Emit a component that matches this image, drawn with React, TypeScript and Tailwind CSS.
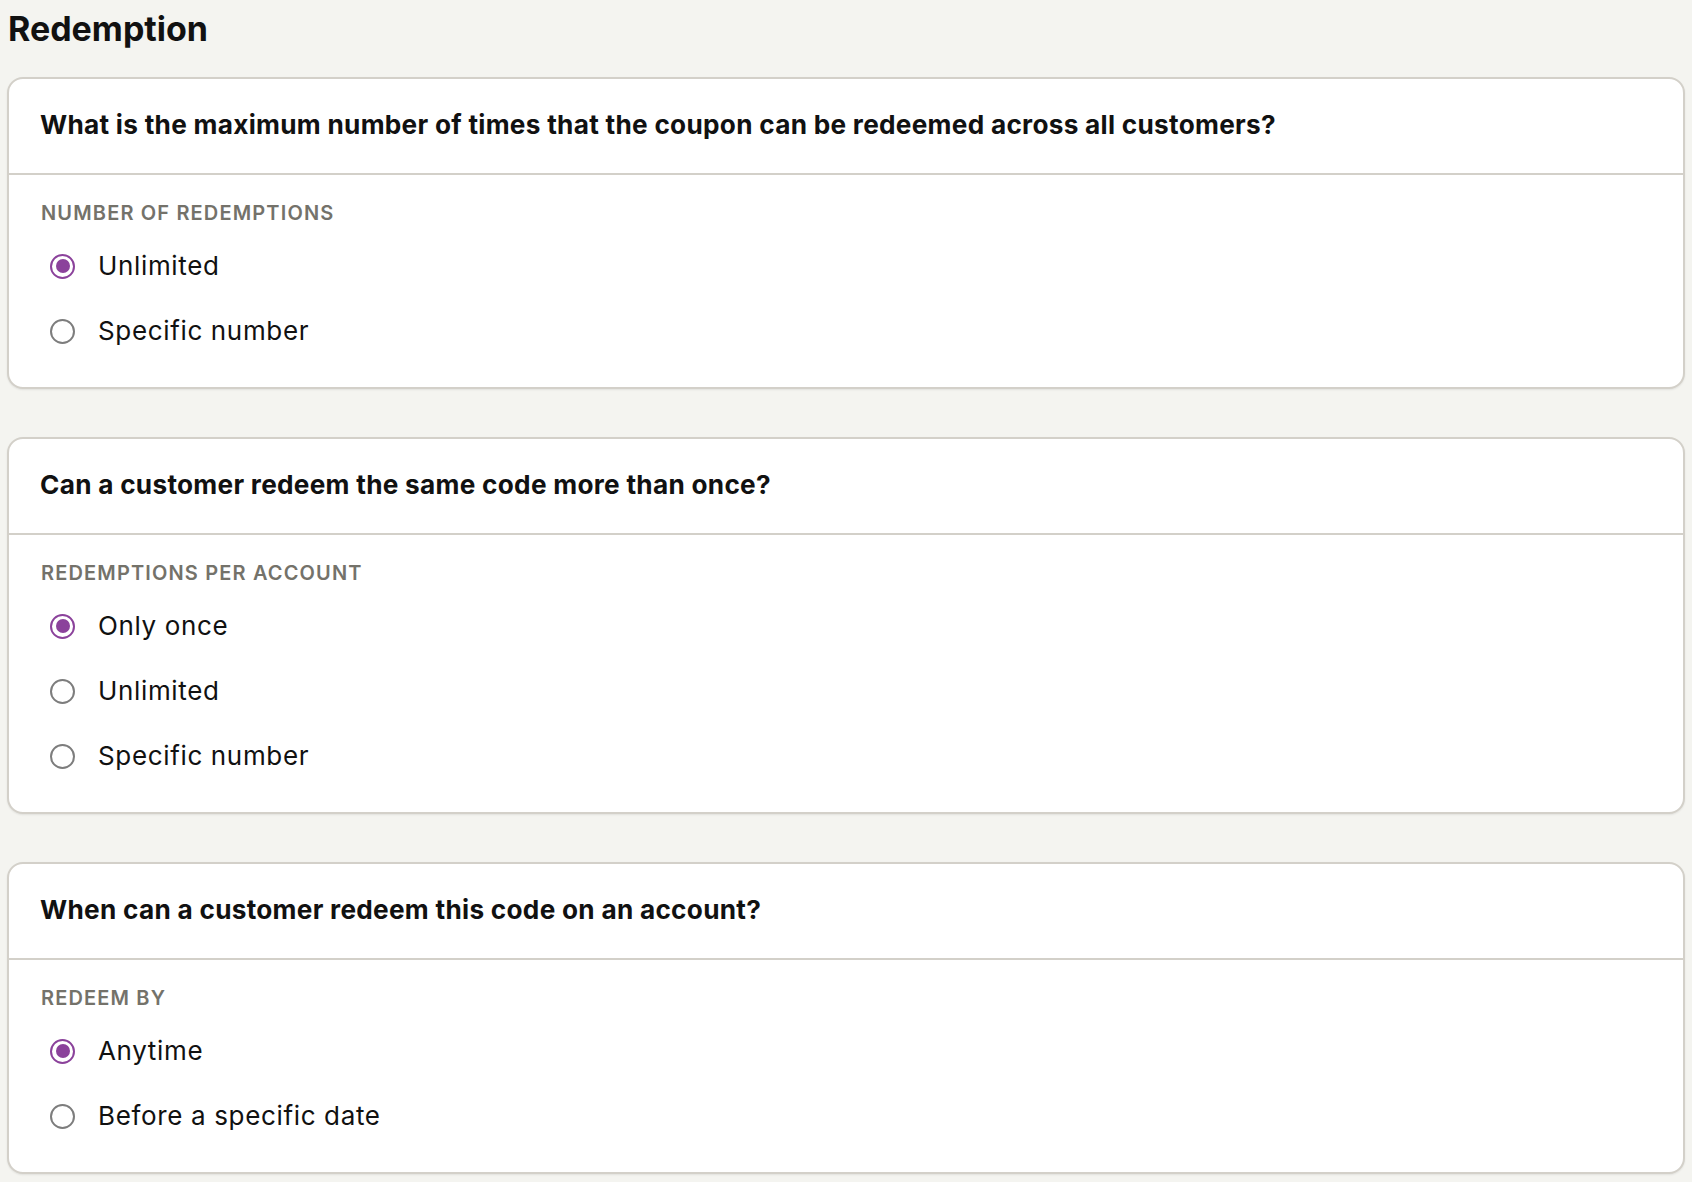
import React from "react";

type Section = {
  question: string;
  label: string;
  options: string[];
  selected: number;
};

const sections: Section[] = [
  {
    question:
      "What is the maximum number of times that the coupon can be redeemed across all customers?",
    label: "Number of redemptions",
    options: ["Unlimited", "Specific number"],
    selected: 0,
  },
  {
    question: "Can a customer redeem the same code more than once?",
    label: "Redemptions per account",
    options: ["Only once", "Unlimited", "Specific number"],
    selected: 0,
  },
  {
    question: "When can a customer redeem this code on an account?",
    label: "Redeem by",
    options: ["Anytime", "Before a specific date"],
    selected: 0,
  },
];

function Radio({ checked }: { checked: boolean }) {
  if (checked) {
    return (
      <span className="flex h-[25px] w-[25px] shrink-0 items-center justify-center rounded-full border-[2px] border-[#8b429b] bg-white">
        <span className="block h-[14px] w-[14px] rounded-full bg-[#8b429b]" />
      </span>
    );
  }
  return (
    <span className="block h-[25px] w-[25px] shrink-0 rounded-full border-[2px] border-[#7d7d7d] bg-white" />
  );
}

function Card({ s }: { s: Section }) {
  return (
    <div className="rounded-[16px] border-2 border-[#d3d0c9] bg-white shadow-[0_1px_2px_rgba(0,0,0,0.08)]">
      <div className="px-[31px] pt-[30px] pb-[32px] text-[26.2px] font-bold leading-[32px] tracking-[0.28px] text-[#111111]">
        {s.question}
      </div>
      <div className="border-t-2 border-[#d3d0c9] px-[32px] pt-[26px] pb-[36px]">
        <div className="text-[20px] font-semibold uppercase leading-[24px] tracking-[1.15px] text-[#74726a]">
          {s.label}
        </div>
        <div className="mt-[21px] flex flex-col gap-[25px]">
          {s.options.map((o, i) => (
            <label
              key={o}
              className="flex h-[40px] items-center gap-[23px] pl-[9px] text-[26px] leading-[32px] tracking-[0.65px] text-[#111111]"
            >
              <Radio checked={i === s.selected} />
              <span>{o}</span>
            </label>
          ))}
        </div>
      </div>
    </div>
  );
}

export default function App() {
  return (
    <div
      className="min-h-screen w-full bg-[#f4f4f0] pl-[7px] pr-[7px] pt-[9px]"
      style={{ fontFamily: "Inter, 'Noto Sans', sans-serif" }}
    >
      <h1 className="mb-[28px] pl-[1px] text-[34px] font-bold leading-[40px] text-[#111111]">
        Redemption
      </h1>
      <div className="flex flex-col gap-[48px]">
        {sections.map((s) => (
          <Card key={s.label} s={s} />
        ))}
      </div>
    </div>
  );
}
